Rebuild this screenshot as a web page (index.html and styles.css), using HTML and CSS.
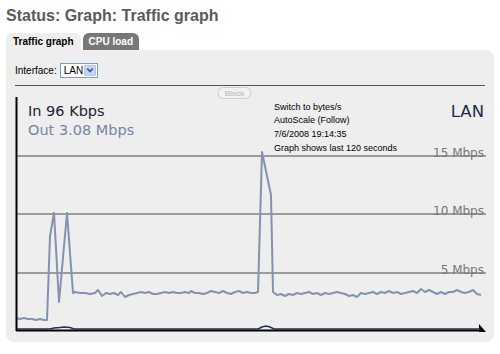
FILE: index.html
```html
<html>

<head>
    <meta http-equiv="Content-Type" content="text/html;charset=utf-8">
    <link rel="stylesheet" href="styles.css">
</head>

<body>
    <div id="main">
        <div class="pgtitle">Status: Graph: Traffic graph</div>

        <ul class="tabs">
            <li class="tab active">Traffic graph</li>
            <li class="tab">CPU load</li>
        </ul>

        <div class="tabcont">
            <div class="ifrow">
                <span class="lbl">Interface:</span>
                <span class="sel">
                    <span class="selval">LAN</span>
                    <span class="selbtn">
                        <svg width="11" height="10" viewBox="0 0 11 10"><path d="M2.5 3.5 L5.5 6.5 L8.5 3.5" fill="none" stroke="#4d6185" stroke-width="2"/></svg>
                    </span>
                </span>
            </div>
            <div class="sep"></div>

            <svg class="graph" width="482" height="252" viewBox="0 0 482 252">
                <!-- block tab -->
                <rect x="208.5" y="1.5" width="32" height="11" rx="4" fill="#f1f1f1" stroke="#cfcfcf"/>
                <text x="224.5" y="10" class="blk" text-anchor="middle">Block</text>

                <!-- grid -->
                <line x1="7" y1="70" x2="476" y2="70" class="grid"/>
                <line x1="7" y1="128" x2="476" y2="128" class="grid"/>
                <line x1="7" y1="187" x2="476" y2="187" class="grid"/>
                <text x="474" y="70.5" class="gl" text-anchor="end">15 Mbps</text>
                <text x="474" y="128.5" class="gl" text-anchor="end">10 Mbps</text>
                <text x="474" y="187.5" class="gl" text-anchor="end">5 Mbps</text>

                <!-- out -->
                <polyline class="gout" points="6,232 10,233 14,232 18,233 22,233 26,234 30,233 34,234 37,234 40,150 44,127 49,216 57,127 63,207 65,206 70,207 75,207 80,208 85,207 88,204 92,210 96,207 100,208 104,207 108,209 111,206 115,211 119,209 123,208 127,207 131,206 135,207 139,206 143,208 147,208 151,207 155,206 159,207 163,206 167,207 171,207 175,206 179,207 181,205 185,207 189,207 193,208 197,207 201,205 205,206 209,207 213,205 217,207 221,208 225,206 229,205 233,207 237,206 241,207 245,207 248,206 252,66 261,109 263,206 267,209 271,208 275,210 279,208 283,209 287,207 291,208 295,207 299,206 303,208 307,207 311,209 315,207 319,208 323,207 327,206 331,207 335,208 339,210 343,209 347,211 351,207 355,208 359,207 363,206 367,208 371,206 375,207 379,205 383,207 387,206 391,208 395,207 399,206 403,205 407,207 411,203 415,206 419,204 423,206 427,208 431,206 435,208 439,206 443,206 447,204 451,206 455,207 459,206 463,204 467,208 471,209"/>

                <!-- axes -->
                <line x1="6.5" y1="11" x2="6.5" y2="245" class="axis"/>
                <line x1="6" y1="244.5" x2="471" y2="244.5" class="axis"/>
                <polygon points="469,238 476,246 469,246" fill="#000"/>

                <!-- in -->
                <polyline class="gin" points="7,243 40,243 44,242 50,241.5 54,241 60,241.5 64,243 248,243 252,241 256,240 260,241 264,243 470,243"/>

                <!-- labels -->
                <text x="18" y="30" class="tin">In 96 Kbps</text>
                <text x="18" y="49" class="tout">Out 3.08 Mbps</text>
                <text x="474" y="31" class="tif" text-anchor="end">LAN</text>

                <text x="264" y="23.5" class="info">Switch to bytes/s</text>
                <text x="264" y="37" class="info">AutoScale (Follow)</text>
                <text x="264" y="50.5" class="info">7/6/2008 19:14:35</text>
                <text x="264" y="64.5" class="info">Graph shows last 120 seconds</text>
            </svg>
        </div>
    </div>
</body>

</html>
```

FILE: styles.css
```css
        body {
            margin:0;
            padding:6px;
            background-color:#FFF;
            font-family:"Liberation Sans", Arial, sans-serif;
        }

        #main {
            width:488px;
        }

        .pgtitle {
            font-size:16px;
            font-weight:bold;
            line-height:20px;
            color:#5a5a5a;
        }

        .tabs {
            list-style:none;
            margin:7px 0 0 0;
            padding:0;
            display:flex;
            gap:2px;
        }

        .tab {
            height:17px;
            line-height:17px;
            font-size:10px;
            font-weight:bold;
            padding:0 6px;
            background-color:#777;
            color:#FFF;
            border-radius:6px 6px 0 0;
        }

        .tab.active {
            padding:0 7px;
            background-color:#EEE;
            color:#000;
        }

        .tabcont {
            background-color:#EEE;
            border-radius:0 8px 8px 8px;
            padding:12px 0 4px 4px;
        }

        .ifrow {
            display:flex;
            align-items:center;
            height:16px;
            margin-left:5px;
            font-size:10px;
            color:#000;
        }

        .lbl {
            margin-right:3px;
        }

        .sel {
            display:flex;
            align-items:center;
            justify-content:space-between;
            box-sizing:border-box;
            width:38px;
            height:15px;
            border:1px solid #7f9db9;
            background-color:#FFF;
            padding:0 1px 0 3px;
        }

        .selbtn {
            display:flex;
            align-items:center;
            justify-content:center;
            width:12px;
            height:11px;
            background-color:#c4d4fb;
            border:1px solid #b3c5f0;
            box-sizing:border-box;
            border-radius:1px;
        }

        .sep {
            margin:7px 0 0 5px;
            width:470px;
            border-top:1px solid #555;
        }

        .graph {
            display:block;
        }

        .grid {
            stroke:#9c9c9c;
            stroke-width:2;
        }

        .axis {
            stroke:#000;
            stroke-width:2;
        }

        .gout {
            fill:none;
            stroke:#8392ae;
            stroke-width:2;
            stroke-linejoin:round;
        }

        .gin {
            fill:none;
            stroke:#22304d;
            stroke-width:1.5;
        }

        .gl {
            font-family:"DejaVu Sans", Verdana, sans-serif;
            font-size:12px;
            fill:#777;
        }

        .tin {
            font-family:"DejaVu Sans", Verdana, sans-serif;
            font-size:14.5px;
            fill:#1b2433;
        }

        .tout {
            font-family:"DejaVu Sans", Verdana, sans-serif;
            font-size:14.5px;
            fill:#7584a4;
        }

        .tif {
            font-family:"DejaVu Sans", Verdana, sans-serif;
            font-size:16.5px;
            fill:#1c2b4a;
        }

        .info {
            font-family:"Liberation Sans", Arial, sans-serif;
            font-size:9px;
            fill:#000;
        }

        .blk {
            font-family:"Liberation Sans", Arial, sans-serif;
            font-size:8px;
            fill:#b5b5b5;
        }
```
